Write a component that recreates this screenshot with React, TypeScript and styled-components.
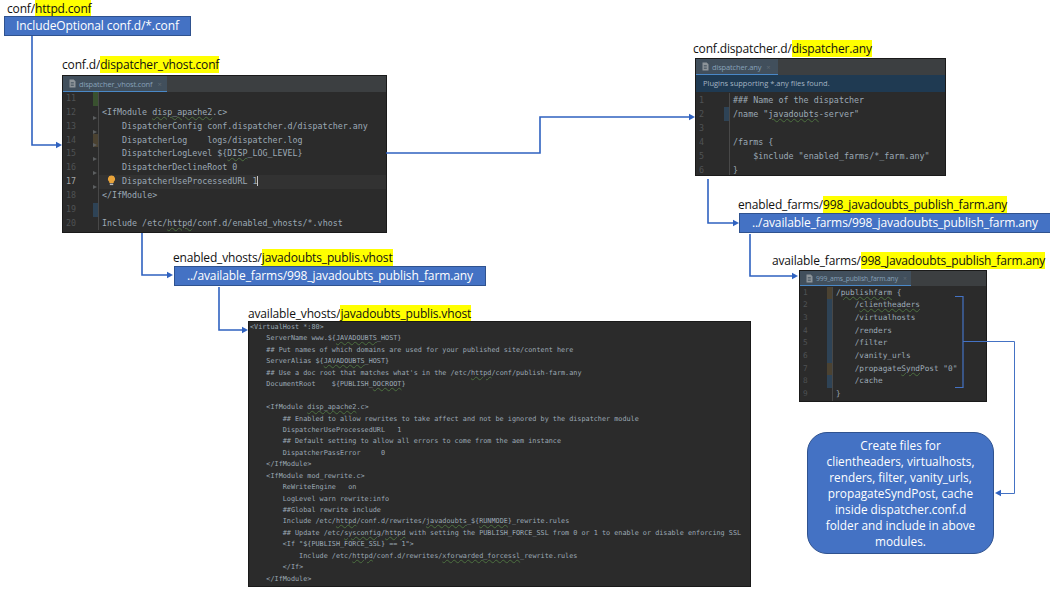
import React from "react";
import styled, { createGlobalStyle } from "styled-components";

//styles
const GlobalStyle = createGlobalStyle`
  html, body {
    margin: 0;
    background: #fff;
  }
`;

const Canvas = styled.div`
  position: relative;
  width: 1050px;
  height: 592px;
  overflow: hidden;
  background: #fff;
  font-family: "Open Sans", "Noto Sans", sans-serif;
`;

const Connectors = styled.svg`
  position: absolute;
  left: 0;
  top: 0;
  pointer-events: none;
`;

// one node of the diagram: a file label with its bar or editor under it
const Node = styled.div<{ $left: number; $top: number; $gap: number }>`
  position: absolute;
  left: ${(p) => p.$left}px;
  top: ${(p) => p.$top}px;
  display: flex;
  flex-direction: column;
  align-items: flex-start;
  gap: ${(p) => p.$gap}px;
`;

const Label = styled.div<{ $indent?: number }>`
  font-size: 12px;
  line-height: 15px;
  height: 15px;
  padding-left: ${(p) => p.$indent || 0}px;
  color: #111;
  white-space: nowrap;
  letter-spacing: -0.16px;
`;

const Mark = styled.span`
  background: #ffff00;
`;

const Bar = styled.div<{ $width: number; $indent: number }>`
  box-sizing: border-box;
  width: ${(p) => p.$width}px;
  height: 20px;
  margin-left: ${(p) => p.$indent}px;
  background: #4472c4;
  border: 1px solid #2f528f;
  color: #fff;
  font-size: 12px;
  line-height: 18px;
  text-align: center;
  white-space: nowrap;
  letter-spacing: -0.1px;
`;

const Editor = styled.div<{ $width: number; $height: number; $indent?: number }>`
  box-sizing: border-box;
  width: ${(p) => p.$width}px;
  height: ${(p) => p.$height}px;
  margin-left: ${(p) => p.$indent || 0}px;
  background: #2b2b2b;
  border: 1px solid #1a1a1a;
  overflow: hidden;
  display: flex;
  flex-direction: column;
`;

const TabBar = styled.div<{ $height: number }>`
  flex: none;
  height: ${(p) => p.$height}px;
  background: #3c3f41;
  display: flex;
`;

const Tab = styled.div<{ $width: number; $size: number }>`
  box-sizing: border-box;
  width: ${(p) => p.$width}px;
  display: flex;
  align-items: center;
  gap: 3px;
  padding-left: 6px;
  background: #414f5c;
  border-bottom: 1.5px solid #4a88c7;
  color: #86a0b8;
  font-size: ${(p) => p.$size}px;
  letter-spacing: -0.15px;
  white-space: nowrap;
`;

const TabClose = styled.span`
  color: #5f6a73;
  margin-left: 2px;
`;

const Banner = styled.div`
  flex: none;
  height: 17px;
  background: #1f3a52;
  color: #a4b4c2;
  font-size: 7.5px;
  line-height: 17px;
  padding-left: 7px;
`;

const Lines = styled.div<{ $top: number; $size: number; $lineHeight: number }>`
  padding-top: ${(p) => p.$top}px;
  font-family: "DejaVu Sans Mono", "Liberation Mono", monospace;
  font-size: ${(p) => p.$size}px;
  line-height: ${(p) => p.$lineHeight}px;
  color: #9ca9b5;
  flex: 1;
  background: #2b2b2b;
`;

const Row = styled.div<{ $height: number; $current?: boolean }>`
  position: relative;
  display: flex;
  height: ${(p) => p.$height}px;
  background: ${(p) => (p.$current ? "#323232" : "transparent")};
`;

const Gutter = styled.div<{ $width: number }>`
  flex: none;
  box-sizing: border-box;
  width: ${(p) => p.$width}px;
  display: flex;
  justify-content: space-between;
  padding-left: 3px;
  background: #2b2b2b;
  border-right: 1px solid #484848;
`;

const LineNumber = styled.span<{ $active?: boolean }>`
  color: ${(p) => (p.$active ? "#a4a4a4" : "#4f5254")};
`;

const Change = styled.span<{ $color: string }>`
  width: 5px;
  background: ${(p) => p.$color};
`;

const Fold = styled.span<{ $left: number }>`
  position: absolute;
  left: ${(p) => p.$left}px;
  top: -4px;
  width: 0;
  height: 0;
  border-left: 4px solid #5c5f61;
  border-top: 2.5px solid transparent;
  border-bottom: 2.5px solid transparent;
`;

const Code = styled.pre<{ $inset: number }>`
  margin: 0;
  padding-left: ${(p) => p.$inset}px;
  font: inherit;
  white-space: pre;
`;

const Typo = styled.span`
  text-decoration: underline wavy #4c6f3f;
  text-decoration-thickness: 0.5px;
  text-underline-offset: 1px;
`;

const Caret = styled.span`
  border-left: 1px solid #c8c8c8;
`;

const Bulb = styled.svg`
  position: absolute;
  left: 44px;
  top: 0;
`;

const NoteCard = styled.div`
  position: absolute;
  left: 807px;
  top: 432px;
  box-sizing: border-box;
  width: 187px;
  height: 122px;
  display: flex;
  flex-direction: column;
  justify-content: center;
  align-items: center;
  background: #4472c4;
  border: 1px solid #2f528f;
  border-radius: 20px;
  color: #fff;
  font-size: 11.8px;
  line-height: 16px;
`;

const NoteLine = styled.div`
  white-space: nowrap;
`;

interface IEditorLine {
  text: string;
  number?: number;
  change?: string;
  fold?: boolean;
  current?: boolean;
  bulb?: boolean;
  caret?: boolean;
}

interface ICodeViewProps {
  lines: IEditorLine[];
  top: number;
  size: number;
  lineHeight: number;
  gutter?: number;
}

const GREEN = "#39512f";
const BROWN = "#4b4231";
const BLUE = "#2e4356";

// words between ~ get the spell-check squiggle
const renderCode = (text: string) =>
  text.split("~").map((part, i) => (i % 2 ? <Typo key={i}>{part}</Typo> : part));

const CodeView: React.FC<ICodeViewProps> = ({ lines, top, size, lineHeight, gutter }) => (
  <Lines $top={top} $size={size} $lineHeight={lineHeight}>
    {lines.map((line, i) => (
      <Row key={i} $height={lineHeight} $current={line.current}>
        {gutter ? (
          <Gutter $width={gutter}>
            <LineNumber $active={line.current}>{line.number}</LineNumber>
            {line.change ? <Change $color={line.change} /> : null}
          </Gutter>
        ) : null}
        {line.fold ? <Fold $left={(gutter || 0) - 6} /> : null}
        {line.bulb ? (
          <Bulb width="9" height="11" viewBox="0 0 9 11">
            <path d="M4.5 0.5a3.6 3.6 0 0 1 2.2 6.5v1H2.3V7A3.6 3.6 0 0 1 4.5 0.5z" fill="#e8a33a" />
            <rect x="2.8" y="8.6" width="3.4" height="1.5" fill="#b9b9b9" />
          </Bulb>
        ) : null}
        <Code $inset={gutter ? 3 : 1}>
          {renderCode(line.text)}
          {line.caret ? <Caret /> : null}
        </Code>
      </Row>
    ))}
  </Lines>
);

const TabIcon: React.FC = () => (
  <svg width="7" height="9" viewBox="0 0 7 9">
    <path d="M0.5 0.5h4.2l1.8 1.8v6.2h-6z" fill="#8d9499" />
    <path d="M1.8 3.5h3M1.8 5h3M1.8 6.5h3" stroke="#414f5c" strokeWidth="0.7" />
  </svg>
);

const numbered = (lines: Omit<IEditorLine, "number">[], first: number): IEditorLine[] =>
  lines.map((line, i) => ({ ...line, number: first + i }));

const vhostLines = numbered(
  [
    { text: "", change: GREEN },
    { text: "<IfModule ~disp_apache2~.c>" },
    { text: "    DispatcherConfig conf.dispatcher.d/dispatcher.any", fold: true },
    { text: "    DispatcherLog    logs/dispatcher.log", change: BROWN, fold: true },
    { text: "    DispatcherLogLevel ${~DISP~_LOG_LEVEL}", fold: true },
    { text: "    DispatcherDeclineRoot 0", fold: true },
    { text: "    DispatcherUseProcessedURL 1", current: true, bulb: true, caret: true, fold: true },
    { text: "</IfModule>", fold: true },
    { text: "", change: BLUE },
    { text: "Include /etc/~httpd~/conf.d/enabled_vhosts/*.vhost" },
  ],
  11
);

const dispatcherLines = numbered(
  [
    { text: "### Name of the dispatcher" },
    { text: "/name \"~javadoubts~-server\"", change: BLUE },
    { text: "" },
    { text: "/farms {" },
    { text: "    $include \"enabled_farms/*_farm.any\"" },
    { text: "}" },
  ],
  1
);

const farmLines = numbered(
  [
    { text: "/~publishfarm~ {", change: BROWN },
    { text: "    /~clientheaders~", change: BLUE },
    { text: "    /virtualhosts", change: BLUE },
    { text: "    /renders", change: BLUE },
    { text: "    /filter", change: BLUE },
    { text: "    /vanity_urls", change: BLUE },
    { text: "    /propagate~Synd~Post \"0\"", change: BROWN },
    { text: "    /cache", change: BLUE },
    { text: "}" },
  ],
  1
);

const publishLines: IEditorLine[] = [
  "<VirtualHost *:80>",
  "    ServerName www.${~JAVADOUBTS~_HOST}",
  "    ## Put names of which domains are used for your published site/content here",
  "    ServerAlias ${~JAVADOUBTS~_HOST}",
  "    ## Use a doc root that matches what's in the /etc/~httpd~/conf/publish-farm.any",
  "    DocumentRoot    ${PUBLISH_~DOCROOT~}",
  "",
  "    <IfModule ~disp_apache2~.c>",
  "        ## Enabled to allow rewrites to take affect and not be ignored by the dispatcher module",
  "        DispatcherUseProcessedURL   1",
  "        ## Default setting to allow all errors to come from the aem instance",
  "        DispatcherPassError     0",
  "    </IfModule>",
  "    <IfModule mod_rewrite.c>",
  "        ReWriteEngine   on",
  "        LogLevel warn rewrite:info",
  "        ##Global rewrite include",
  "        Include /etc/~httpd~/conf.d/rewrites/~javadoubts~_${~RUNMODE~}_rewrite.rules",
  "        ## Update /etc/~sysconfig~/~httpd~ with setting the PUBLISH_FORCE_SSL from 0 or 1 to enable or disable enforcing SSL",
  "        <If \"${PUBLISH_FORCE_SSL} == 1\">",
  "            Include /etc/~httpd~/conf.d/rewrites/~xforwarded_forcessl~_rewrite.rules",
  "        </If>",
  "    </IfModule>",
].map((text) => ({ text }));

const noteLines = [
  "Create files for",
  "clientheaders, virtualhosts,",
  "renders, filter, vanity_urls,",
  "propagateSyndPost, cache",
  "inside dispatcher.conf.d",
  "folder and include in above",
  "modules.",
];

const App: React.FC = () => (
  <Canvas>
    <GlobalStyle />

    <Node $left={4} $top={1} $gap={0}>
      <Label $indent={3}>
        conf/<Mark>httpd.conf</Mark>
      </Label>
      <Bar $width={187} $indent={0}>IncludeOptional conf.d/*.conf</Bar>
    </Node>

    <Node $left={62} $top={57} $gap={3}>
      <Label>
        conf.d/<Mark>dispatcher_vhost.conf</Mark>
      </Label>
      <Editor $width={325} $height={158}>
        <TabBar $height={16}>
          <Tab $width={104} $size={7.5}>
            <TabIcon />
            dispatcher_vhost.conf
            <TabClose>×</TabClose>
          </Tab>
        </TabBar>
        <CodeView lines={vhostLines} top={0} size={8.34} lineHeight={13.85} gutter={36} />
      </Editor>
    </Node>

    <Node $left={173} $top={250} $gap={1}>
      <Label>
        enabled_vhosts/<Mark>javadoubts_publis.vhost</Mark>
      </Label>
      <Bar $width={312} $indent={1}>../available_farms/998_javadoubts_publish_farm.any</Bar>
    </Node>

    <Node $left={248} $top={306} $gap={0}>
      <Label>
        available_vhosts/<Mark>javadoubts_publis.vhost</Mark>
      </Label>
      <Editor $width={503} $height={266}>
        <CodeView lines={publishLines} top={0} size={6.8} lineHeight={11.45} />
      </Editor>
    </Node>

    <Node $left={693} $top={41} $gap={2}>
      <Label>
        conf.dispatcher.d/<Mark>dispatcher.any</Mark>
      </Label>
      <Editor $width={251} $height={118} $indent={2}>
        <TabBar $height={16}>
          <Tab $width={82} $size={7.5}>
            <TabIcon />
            dispatcher.any
            <TabClose>×</TabClose>
          </Tab>
        </TabBar>
        <Banner>Plugins supporting *.any files found.</Banner>
        <CodeView lines={dispatcherLines} top={1} size={8.4} lineHeight={14} gutter={34} />
      </Editor>
    </Node>

    <Node $left={738} $top={197} $gap={1}>
      <Label>
        enabled_farms/<Mark>998_javadoubts_publish_farm.any</Mark>
      </Label>
      <Bar $width={312} $indent={1}>../available_farms/998_javadoubts_publish_farm.any</Bar>
    </Node>

    <Node $left={772} $top={253} $gap={2}>
      <Label>
        available_farms/<Mark>998_Javadoubts_publish_farm.any</Mark>
      </Label>
      <Editor $width={188} $height={132} $indent={27}>
        <TabBar $height={15}>
          <Tab $width={111} $size={6.8}>
            <TabIcon />
            999_ams_publish_farm.any
            <TabClose>×</TabClose>
          </Tab>
        </TabBar>
        <CodeView lines={farmLines} top={0.5} size={7.76} lineHeight={12.7} gutter={33} />
      </Editor>
    </Node>

    <NoteCard>
      {noteLines.map((line) => (
        <NoteLine key={line}>{line}</NoteLine>
      ))}
    </NoteCard>

    <Connectors width="1050" height="592" viewBox="0 0 1050 592">
      <g fill="none" stroke="#2f62c0" strokeWidth="1.6">
        <path d="M32 36V145H57" />
        <path d="M386 153H540V117H690" />
        <path d="M142 233V275H168" />
        <path d="M219 287V330H243" />
        <path d="M708 179V223H734" />
        <path d="M750 234V276H793" />
      </g>
      <g fill="#2f62c0">
        <path d="M62 145l-6-3.2v6.4z" />
        <path d="M695 117l-6-3.2v6.4z" />
        <path d="M173 275l-6-3.2v6.4z" />
        <path d="M248 330l-6-3.2v6.4z" />
        <path d="M739 223l-6-3.2v6.4z" />
        <path d="M798 276l-6-3.2v6.4z" />
        <path d="M995 493l6-3.2v6.4z" />
      </g>
      <g fill="none" stroke="#4472c4" strokeWidth="1">
        <path d="M955 296.5h8v91h-8" strokeWidth="1.2" />
        <path d="M963 341.5H1014.5V493.5H1000" />
      </g>
    </Connectors>
  </Canvas>
);

export default App;
